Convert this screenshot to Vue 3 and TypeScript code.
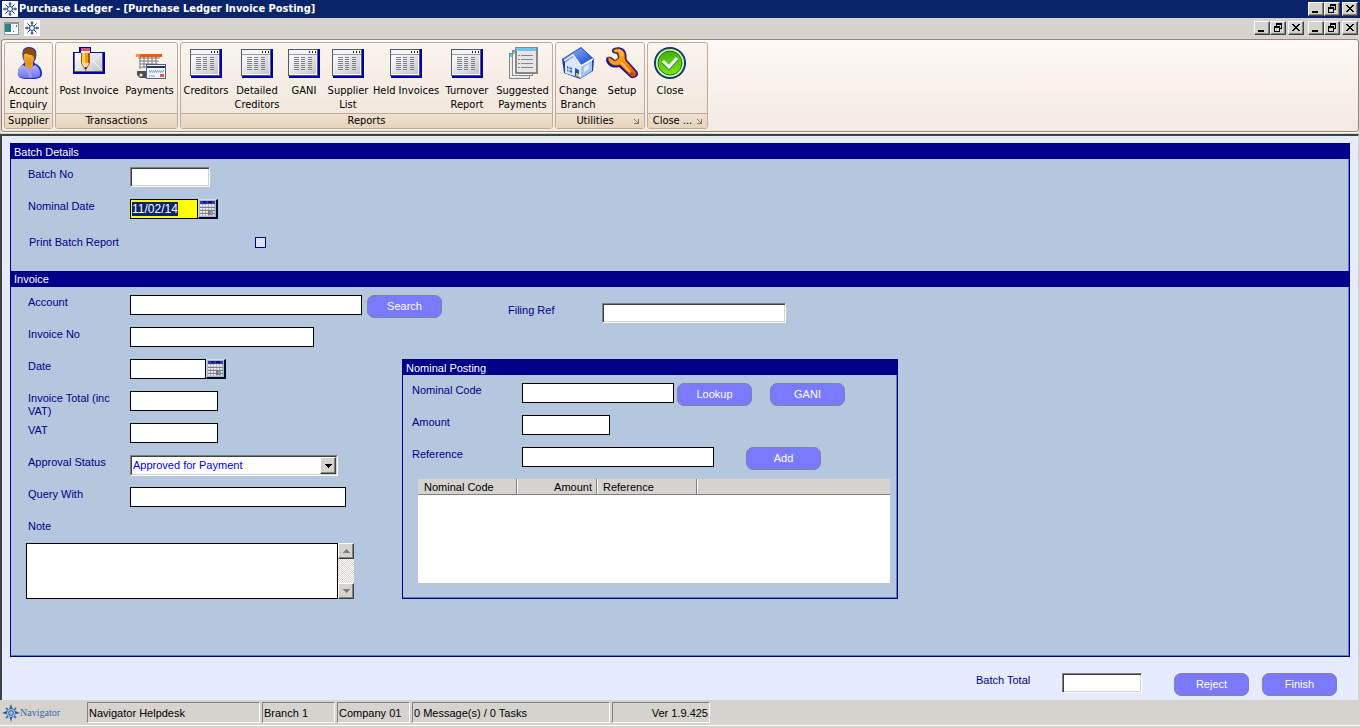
<script setup lang="ts">
import { onMounted, ref } from 'vue'

type IconName =
  | 'user' | 'post' | 'payments' | 'grid' | 'pages' | 'house' | 'wrench' | 'tick'

interface RibbonItem { label: string; icon: IconName; width: number }
interface RibbonGroup { title: string; launcher: boolean; items: RibbonItem[] }

const groups: RibbonGroup[] = [
  { title: 'Supplier', launcher: false, items: [{ label: 'Account\nEnquiry', icon: 'user', width: 47 }] },
  {
    title: 'Transactions',
    launcher: false,
    items: [
      { label: 'Post Invoice', icon: 'post', width: 66 },
      { label: 'Payments', icon: 'payments', width: 55 },
    ],
  },
  {
    title: 'Reports',
    launcher: false,
    items: [
      { label: 'Creditors', icon: 'grid', width: 50 },
      { label: 'Detailed\nCreditors', icon: 'grid', width: 52 },
      { label: 'GANI', icon: 'grid', width: 42 },
      { label: 'Supplier\nList', icon: 'grid', width: 46 },
      { label: 'Held Invoices', icon: 'grid', width: 70 },
      { label: 'Turnover\nReport', icon: 'grid', width: 52 },
      { label: 'Suggested\nPayments', icon: 'pages', width: 59 },
    ],
  },
  {
    title: 'Utilities',
    launcher: true,
    items: [
      { label: 'Change\nBranch', icon: 'house', width: 44 },
      { label: 'Setup', icon: 'wrench', width: 44 },
    ],
  },
  { title: 'Close ...', launcher: true, items: [{ label: 'Close', icon: 'tick', width: 44 }] },
]

const statusCells = [
  { text: 'Navigator Helpdesk', width: 173 },
  { text: 'Branch 1', width: 73 },
  { text: 'Company 01', width: 73 },
  { text: '0 Message(s) / 0 Tasks', width: 198 },
  { text: 'Ver 1.9.425', width: 98, right: true },
]

const windowButtons = ['Minimise', 'Restore', 'Close window']

const nominalDate = ref('11/02/14')
const approval = ref('Approved for Payment')
const dateBox = ref<HTMLInputElement | null>(null)

onMounted(() => {
  dateBox.value?.focus()
  dateBox.value?.select()
})
</script>

<template>
  <div class="window">
    <svg class="defs" width="0" height="0" aria-hidden="true">
      <defs>
        <linearGradient id="skin" x1="0" y1="0" x2="0" y2="1">
          <stop offset="0" stop-color="#ffc24a" /><stop offset="1" stop-color="#e08a10" />
        </linearGradient>
        <linearGradient id="shirt" x1="0" y1="0" x2="0" y2="1">
          <stop offset="0" stop-color="#b9b4ff" /><stop offset="1" stop-color="#6a72f0" />
        </linearGradient>
        <linearGradient id="paper" x1="0" y1="0" x2="1" y2="1">
          <stop offset="0" stop-color="#ffffff" /><stop offset="1" stop-color="#c4c4cc" />
        </linearGradient>
        <linearGradient id="roof" x1="0" y1="0" x2="1" y2="1">
          <stop offset="0" stop-color="#9cc0ff" /><stop offset="1" stop-color="#0a3fd0" />
        </linearGradient>
        <linearGradient id="metal" x1="0" y1="0" x2="1" y2="1">
          <stop offset="0" stop-color="#ffb83c" /><stop offset="0.6" stop-color="#ff8a10" /><stop offset="1" stop-color="#d84a00" />
        </linearGradient>
        <linearGradient id="green" x1="0" y1="0" x2="0" y2="1">
          <stop offset="0" stop-color="#3fb010" /><stop offset="1" stop-color="#7fe810" />
        </linearGradient>
        <symbol id="compass" viewBox="0 0 16 16">
          <g stroke="#163a80" fill="none">
            <circle cx="8" cy="8" r="2.5" />
            <path d="M8 1v4M8 11v4M1 8h4M11 8h4M3.5 3.5l2.6 2.6M10 10l2.5 2.5M12.500 3.500L10 6M6 10l-2.500 2.500" />
            <path d="M6.500 3h3M6.500 13h3M3 6.500v3M13 6.500v3" />
          </g>
        </symbol>
        <symbol id="calendar" viewBox="0 0 17 17">
          <path d="M0 0h17v17H0z" fill="#b4b4c0" />
          <path d="M1 1h15v3H1z" fill="#2c3fae" />
          <path d="M4 2h3M9 2h4" stroke="#0c145c" stroke-width="2" />
          <path d="M1 5.500h15M1 8.500h15M1 11.500h15M1 14.500h15" stroke="#f4f4f8" stroke-width="2" stroke-dasharray="2 1" />
          <path d="M1 7.500h15M1 10.500h15M1 13.500h15" stroke="#80808c" />
          <path d="M9 10h5v5H9z" fill="#b06078" /><path d="M11 11h3v3h-3z" fill="#20c8d8" />
        </symbol>
      </defs>
    </svg>

    <header class="titlebar">
      <svg class="compass" width="16" height="16"><use href="#compass" /></svg>
      <h1>Purchase Ledger - [Purchase Ledger Invoice Posting]</h1>
      <div class="winset">
        <button v-for="(name, i) in windowButtons" :key="name" type="button" class="winbtn" :aria-label="name">
          <svg width="12" height="10" viewBox="0 0 12 10" shape-rendering="crispEdges">
            <path v-if="i === 0" d="M2 7h6v2H2z" />
            <path v-else-if="i === 1" d="M4 0h6v6H8V5h1V2H5v1H4zM2 3h6v6H2zM3 5v3h4V5z" fill-rule="evenodd" />
            <path v-else d="M2 1h2v1h1v1h2V2h1V1h2v1H9v1H8v1H7v1h1v1h1v1h1v1H8V7H7V6H5v1H4v1H2V7h1V6h1V5h1V4H4V3H3V2H2z" />
          </svg>
        </button>
      </div>
    </header>

    <div class="mdibar">
      <svg class="docicon" width="15" height="13" viewBox="0 0 15 13" shape-rendering="crispEdges">
        <path d="M0 0h15v13H0z" fill="#8c98a8" /><path d="M1 2h13v10H1z" fill="#fff" />
        <path d="M1 2h6v8H1z" fill="#2a8a78" /><path d="M5 3h2v7H5z" fill="#3c68b0" />
        <path d="M9 9h1v1H9zM12 3h1v2h-1z" fill="#2a8a78" /><path d="M8 3h4v4H8z" fill="#eef" />
      </svg>
      <svg class="compass" width="16" height="16"><use href="#compass" /></svg>
      <div class="winsets">
        <div v-for="set in 2" :key="set" class="winset">
          <button v-for="(name, i) in windowButtons" :key="name" type="button" class="winbtn" :aria-label="name">
            <svg width="12" height="10" viewBox="0 0 12 10" shape-rendering="crispEdges">
              <path v-if="i === 0" d="M2 7h6v2H2z" />
              <path v-else-if="i === 1" d="M4 0h6v6H8V5h1V2H5v1H4zM2 3h6v6H2zM3 5v3h4V5z" fill-rule="evenodd" />
              <path v-else d="M2 1h2v1h1v1h2V2h1V1h2v1H9v1H8v1H7v1h1v1h1v1h1v1H8V7H7V6H5v1H4v1H2V7h1V6h1V5h1V4H4V3H3V2H2z" />
            </svg>
          </button>
        </div>
      </div>
    </div>

    <nav class="ribbon">
      <section v-for="group in groups" :key="group.title" class="group">
        <div class="items">
          <button v-for="item in group.items" :key="item.label" type="button" class="tool" :style="{ width: item.width + 'px' }">
            <svg width="32" height="32" viewBox="0 0 32 32" aria-hidden="true">
              <g v-if="item.icon === 'user'">
                <path d="M10 3C12-1 21-1 23 4c1 5 0 8-2 11 1 2 3 2 5 4 3 3 4 8 2 11-4 3-18 3-22 0-2-4-1-9 3-12l3-3c-3-3-3-8-2-12z" fill="#1830d0" />
                <path d="M5 29c-1-5 1-9 5-11 4 3 8 3 12 0 4 2 6 7 5 11-4 3-18 3-22 0z" fill="url(#shirt)" />
                <path d="M12 15h8v4l-3 5-5-5z" fill="#e89a20" />
                <path d="M14 23l3-2 2 9h-3z" fill="#9a9cf8" />
                <ellipse cx="16" cy="10" rx="5.500" ry="8" fill="url(#skin)" />
                <path d="M10 8c-1-4 2-7 6-7 5 0 7 3 7 8l-2 4c0-4-1-5-4-5-3-1-4-2-7 0z" fill="#8a4a08" />
              </g>
              <g v-else-if="item.icon === 'post'">
                <path d="M0 5h6V0h12v5h14v22H0z" fill="#0000a4" />
                <path d="M1 6h29v19H1z" fill="#58606a" /><path d="M2 6h27v18H2z" fill="url(#paper)" />
                <path d="M2 23l9-9h9l9 9M20 14l8-7" fill="none" stroke="#f4f4f8" stroke-width="1" />
                <path d="M8 6h9v10l-4.500 8L8 16z" fill="#a85400" /><path d="M9 6h3v10H9z" fill="#ffd048" /><path d="M12 6h3v10h-3z" fill="#f49a18" />
                <path d="M8 1h9v4H8z" fill="#e0506c" /><path d="M8 4h9v2H8z" fill="#e8e8e8" />
                <path d="M9 16h7l-3.500 7z" fill="#f8ddb0" /><path d="M11.500 20h2.500l-1.200 3z" fill="#222" />
              </g>
              <g v-else-if="item.icon === 'payments'">
                <path d="M2 7h26v3H2z" fill="#f05a10" /><path d="M2 7h4v3H2z" fill="#ff9440" />
                <path d="M4 11h22l-2 10H6z" fill="#fff" />
                <path d="M4 11h22M5 14h20M6 17h18M6 20h18M6 10v12M10 10v11M14 10v11M18 10v11M22 10v11" stroke="#777" fill="none" />
                <path d="M3 24h10v7H6l-3-3z" fill="#484c54" /><circle cx="7" cy="28" r="1.500" fill="#eee" />
                <path d="M12 17h20v15H12z" fill="#50608c" /><path d="M13 18h18v13H13z" fill="#eef4fc" />
                <path d="M13 19h18v2H13z" fill="#303848" /><path d="M15 24h15M16 25h14" stroke="#4d83d8" stroke-dasharray="1 1" />
                <path d="M15 29h6" stroke="#98a0b0" /><path d="M26 27h4v3h-4z" fill="#d8642c" />
              </g>
              <g v-else-if="item.icon === 'grid'" shape-rendering="crispEdges">
                <path d="M0 2h32v29H1z" fill="#0000b4" /><path d="M0 2h30v27H0z" fill="#555b66" />
                <path d="M1 3h28v25H1z" fill="#f4f4f6" /><path d="M1 7h28v1H1z" fill="#9a9aa0" />
                <path d="M2 8h26v19H2z" fill="url(#paper)" /><path d="M21 5h1M24 5h1M27 5h1" stroke="#222" stroke-width="2" />
                <path d="M6 10.500h5M6 12.500h5M6 14.500h5M6 16.500h5M6 18.500h5M6 20.500h5M6 22.500h5M13 10.500h4M13 12.500h4M13 14.500h4M13 16.500h4M13 18.500h4M13 20.500h4M13 22.500h4M20 10.500h4M20 12.500h4M20 14.500h4M20 16.500h4M20 18.500h4M20 20.500h4M20 22.500h4" stroke="#808088" />
              </g>
              <g v-else-if="item.icon === 'pages'" shape-rendering="crispEdges">
                <path d="M2 6.500h20v25H2z" fill="#ececec" stroke="#888" /><path d="M3 7h5v3H3z" fill="#60c8f8" />
                <path d="M5 3.500h20v25H5z" fill="#f4f4f4" stroke="#888" /><path d="M6 4h5v3H6z" fill="#60c8f8" />
                <path d="M8.500.500h21v25h-21z" fill="#e6e6e6" stroke="#888" stroke-width="2" /><path d="M9 1h20v3H9z" fill="#68c8f8" />
                <path d="M11 8.500h2M14 8.500h12M11 12.500h2M14 12.500h12M11 16.500h2M14 16.500h12M11 20.500h2M14 20.500h12" stroke="#888" />
              </g>
              <g v-else-if="item.icon === 'house'">
                <path d="M0 12L19 0l13 12-1 12-13 8-16-6z" fill="#183cb0" />
                <path d="M3 15l7-7 9 11v12L3 26z" fill="#dce9fc" /><path d="M19 19l11-7v12l-11 7z" fill="#a7c4ef" />
                <path d="M1 12L19 1l12 11-12 8-8-10-7 5z" fill="url(#roof)" />
                <path d="M2 14l9-6 8 11 12-7" stroke="#fff" stroke-width="1.500" fill="none" />
                <path d="M5 19l5 2v5l-5-2z" fill="#2860c8" /><path d="M13 21l4 2v8l-4-2z" fill="#2050b8" /><path d="M14 26l3 1v3l-3-1z" fill="#e9be58" />
                <path d="M7 19v6M5 22l5 1" stroke="#e8f2ff" /><path d="M22 20l5-3v5l-5 3z" fill="#dceaff" />
              </g>
              <g v-else-if="item.icon === 'wrench'">
                <path d="M8 1c5-2 11 0 12 5 1 3 0 5 1 7l10 11c3 4-1 8-6 7L13 20c-6 2-12-1-13-7 0-3 2-4 5-3l4 3 3-2-1-4-4-1c-2-2-1-4 1-5z" fill="#0818a4" />
                <path d="M9 2c4-1 9 1 10 5 0 3 0 5 1 7l10 11c1 3-1 5-4 5L14 18c-6 2-11-1-12-6 0-2 1-2 2-1l5 3 4-3-1-5-4-1c-1-1-1-2 1-3z" fill="url(#metal)" stroke="#903000" />
                <path d="M12 3c4 0 5 3 4 6M15 15l9 10" stroke="#ffd060" stroke-width="1.500" fill="none" />
                <circle cx="26" cy="27" r="1.500" fill="#b83400" />
              </g>
              <g v-else>
                <circle cx="16" cy="16" r="16" fill="#0a2a90" /><circle cx="16" cy="16" r="15" fill="#145a14" />
                <circle cx="16" cy="16" r="14" fill="#dff4d8" /><circle cx="16" cy="16" r="12" fill="url(#green)" stroke="#187808" />
                <path d="M9 15l6 6 8-9" stroke="#4c8c38" stroke-width="4" fill="none" /><path d="M9 14l6 6 8-9" stroke="#f4f4f4" stroke-width="3" fill="none" />
              </g>
            </svg>
            <span>{{ item.label }}</span>
          </button>
        </div>
        <div class="caption">
          <span>{{ group.title }}</span>
          <svg v-if="group.launcher" width="6" height="6" viewBox="0 0 6 6" shape-rendering="crispEdges">
            <path d="M0 0h1v1H0zM1 1h1v1H1zM2 2h1v1H2zM3 3h1v1H3zM4 0h1v5H0V4h4z" fill="#8a7468" />
          </svg>
        </div>
      </section>
    </nav>

    <main class="workspace">
      <div class="panel ledger">
        <h2>Batch Details</h2>
        <div class="batch">
          <div class="field">
            <label for="batch-no">Batch No</label>
            <input id="batch-no" class="sunken w80" type="text" />
          </div>
          <div class="field">
            <label for="nominal-date">Nominal Date</label>
            <input id="nominal-date" ref="dateBox" v-model="nominalDate" class="active" type="text" />
            <button type="button" class="cal" aria-label="Pick nominal date"><svg width="17" height="17"><use href="#calendar" /></svg></button>
          </div>
          <div class="field printrow">
            <label for="print-batch">Print Batch Report</label>
            <input id="print-batch" type="checkbox" />
          </div>
        </div>

        <h2>Invoice</h2>
        <div class="invoice">
          <div class="entry">
            <div class="field">
              <label for="account">Account</label>
              <input id="account" class="w232" type="text" />
              <button type="button" class="pill search">Search</button>
            </div>
            <div class="field">
              <label for="invoice-no">Invoice No</label>
              <input id="invoice-no" class="w184" type="text" />
            </div>
            <div class="field">
              <label for="invoice-date">Date</label>
              <input id="invoice-date" class="w76" type="text" />
              <button type="button" class="cal" aria-label="Pick invoice date"><svg width="17" height="17"><use href="#calendar" /></svg></button>
            </div>
            <div class="field">
              <label for="invoice-total">Invoice Total (inc VAT)</label>
              <input id="invoice-total" class="w88" type="text" />
            </div>
            <div class="field">
              <label for="vat">VAT</label>
              <input id="vat" class="w88" type="text" />
            </div>
            <div class="field">
              <label for="approval">Approval Status</label>
              <div class="combo">
                <select id="approval" v-model="approval"><option>Approved for Payment</option></select>
                <span class="arrow"><svg width="7" height="4" viewBox="0 0 7 4" shape-rendering="crispEdges"><path d="M0 0h7v1H6v1H5v1H4v1H3V3H2V2H1V1H0z" /></svg></span>
              </div>
            </div>
            <div class="field">
              <label for="query">Query With</label>
              <input id="query" class="w216" type="text" />
            </div>
            <div class="note">
              <label for="note">Note</label>
              <div class="notebox">
                <textarea id="note"></textarea>
                <div class="scroll">
                  <button type="button" aria-label="Scroll up"><svg width="7" height="4" viewBox="0 0 7 4" shape-rendering="crispEdges"><path d="M3 0h1v1h1v1h1v1h1v1H0V3h1V2h1V1h1z" fill="#808080" /></svg></button>
                  <button type="button" aria-label="Scroll down"><svg width="7" height="4" viewBox="0 0 7 4" shape-rendering="crispEdges"><path d="M0 0h7v1H6v1H5v1H4v1H3V3H2V2H1V1H0z" fill="#808080" /></svg></button>
                </div>
              </div>
            </div>
          </div>

          <div class="posting">
            <div class="field filing">
              <label for="filing">Filing Ref</label>
              <input id="filing" class="sunken w184" type="text" />
            </div>
            <section class="panel nominal">
              <h2>Nominal Posting</h2>
              <div class="nominal-body">
                <div class="field">
                  <label for="code">Nominal Code</label>
                  <input id="code" class="w152" type="text" />
                  <button type="button" class="pill lookup">Lookup</button>
                  <button type="button" class="pill gani">GANI</button>
                </div>
                <div class="field">
                  <label for="amount">Amount</label>
                  <input id="amount" class="w88" type="text" />
                </div>
                <div class="field">
                  <label for="reference">Reference</label>
                  <input id="reference" class="w192" type="text" />
                  <button type="button" class="pill add">Add</button>
                </div>
                <div class="list">
                  <table>
                    <thead>
                      <tr><th class="code">Nominal Code</th><th class="amount">Amount</th><th class="ref">Reference</th><th></th></tr>
                    </thead>
                  </table>
                </div>
              </div>
            </section>
          </div>
        </div>
      </div>

      <div class="totals">
        <label for="total">Batch Total</label>
        <input id="total" class="sunken w80" type="text" />
        <button type="button" class="pill reject">Reject</button>
        <button type="button" class="pill">Finish</button>
      </div>
    </main>

    <footer class="status">
      <div class="brand">
        <svg width="18" height="18" viewBox="0 0 18 18">
          <path d="M9 0l2 6 7 3-7 2-2 7-2-7-7-2 7-3z" fill="#2a5a9c" />
          <path d="M4 4l3 3M14 4l-3 3M4 14l3-3M14 14l-3-3" stroke="#4a7ab4" stroke-width="2" />
          <circle cx="9" cy="9" r="3.500" fill="#3c6cab" stroke="#c8d8ea" />
          <path d="M9 7v4M7 9h4" stroke="#c8d8ea" />
        </svg>
        <span>Navigator</span>
      </div>
      <div v-for="cell in statusCells" :key="cell.text" class="cell" :class="{ right: cell.right }" :style="{ width: cell.width + 'px' }">{{ cell.text }}</div>
    </footer>
  </div>
</template>

<style>
html, body { margin: 0; height: 100%; }
#app { min-height: 100%; display: flex; }
</style>

<style scoped>
* { box-sizing: border-box; }
.window {
  flex: 1;
  display: flex;
  flex-direction: column;
  min-height: 100vh;
  background: #d6d3ce;
  font: 11px/13px "Liberation Sans", Arial, sans-serif;
  color: #000;
}
.defs { position: absolute; }
button, input, select, textarea { font: inherit; margin: 0; padding: 0; border-radius: 0; }
h1, h2 { margin: 0; font-weight: normal; }

.titlebar { display: flex; align-items: center; height: 18px; padding: 0 2px; background: #0a246a; }
.titlebar h1 { flex: 1; margin-left: 1px; font: bold 11px/18px "DejaVu Sans Condensed", sans-serif; color: #fff; }
.compass { background: #fff; }
.mdibar { display: flex; align-items: center; height: 20px; padding: 0 2px 0 4px; }
.mdibar .compass { margin-left: 5px; }
.winsets { display: flex; gap: 4px; margin-left: auto; }
.winset { display: flex; }
.winbtn {
  width: 16px; height: 14px;
  display: flex; align-items: center; justify-content: center;
  background: #d6d3ce;
  border: 1px solid; border-color: #fff #404040 #404040 #fff;
  box-shadow: inset -1px -1px #848284;
}
.winbtn svg { flex: none; }
.winbtn:last-child { margin-left: 2px; }

.ribbon {
  display: flex; gap: 2px;
  height: 93px; margin: 1px 1px 2px 1px; padding: 2px;
  background: linear-gradient(#fdf9f6, #f3e9e2);
  border: 1px solid #9c8478;
  border-radius: 3px;
  box-shadow: 0 1px #fff;
}
.group {
  display: flex; flex-direction: column;
  border: 1px solid #bfaa9f; border-radius: 3px;
  background: linear-gradient(#fbf5ef, #efe4d8);
}
.items { flex: 1; display: flex; }
.tool {
  display: flex; flex-direction: column; align-items: center;
  padding-top: 4px; border: 0; background: none; color: #000;
  font: 11px/14px "DejaVu Sans Condensed", sans-serif;
  white-space: pre; text-align: center;
}
.tool svg { flex: none; }
.tool span { margin-top: 5px; }
.caption {
  display: flex; align-items: center; justify-content: center;
  height: 15px; border-top: 1px solid #bfaa9f;
  background: linear-gradient(#eee0cf, #e6d4bc);
  font: 11px/14px "DejaVu Sans Condensed", sans-serif;
}
.caption span { flex: 1; text-align: center; white-space: nowrap; }
.caption svg { margin: 2px 4px 0 0; }
.group:last-child { min-width: 61px; }

.workspace {
  flex: 1; display: flex; flex-direction: column;
  margin-right: 1px; padding: 7px 8px 0 8px;
  background: #e6ebff;
  border: solid #404040; border-width: 2px 1px 0 2px;
  border-right-color: #d6d3ce;
  color: #00008b;
}
.panel { border: 1px solid #00008b; background: #b5c7de; box-shadow: inset -1px -1px #5a82b8; }
.panel h2 { height: 16px; padding-left: 3px; background: #00008b; color: #fff; font-size: 11px; line-height: 17px; }
.panel > h2:first-child { height: 15px; line-height: 16px; }
.ledger { flex: 1; }
.batch { height: 112px; padding: 8px 17px 0; }
.invoice { display: flex; padding: 8px 0 0 15px; }

.field { display: flex; height: 32px; padding-left: 2px; }
.batch .field { padding-left: 0; }
.field label { flex: none; width: 102px; padding: 1px 8px 0 0; }
.entry { width: 376px; flex: none; }
input[type="text"] { flex: none; height: 20px; padding: 0 2px; border: 1px solid #000; background: #fff; color: #00f; outline: none; }
input.sunken { border-color: #808080 #fff #fff #808080; box-shadow: inset 1px 1px #404040, inset -1px -1px #d6d3ce; }
input[type="text"].active { width: 68px; padding: 0 1px; background: #ff0; color: #00008b; font-size: 12px; }
input.active::selection { background: #0a246a; color: #fff; }
.w76 { width: 76px; }
.w80 { width: 80px; }
.w88 { width: 88px; }
.w152 { width: 152px; }
.w184 { width: 184px; }
.w192 { width: 192px; }
.w216 { width: 216px; }
.w232 { width: 232px; }
.cal {
  flex: none; width: 20px; height: 20px; display: flex;
  border: solid; border-width: 1px 2px 2px 1px;
  border-color: #c8dcf4 #000c28 #000c28 #c8dcf4;
  background: #d6d3ce;
}
.printrow { align-items: center; }
.batch .printrow { padding-left: 1px; height: 23px; }
.batch .printrow label { width: 226px; padding: 0; }
input[type="checkbox"] { appearance: none; width: 11px; height: 11px; border: 1px solid #00008b; background: #dce4f2; }
.pill {
  flex: none; width: 75px; height: 23px;
  border: 1px solid #84829c; border-radius: 7px;
  background: #7b79ff; color: #fff;
}
.search { margin-left: 5px; }
.combo { position: relative; width: 208px; height: 21px; border: 1px solid; border-color: #808080 #fff #fff #808080; }
.combo select {
  width: 100%; height: 100%; appearance: none; padding: 0 18px 0 1px;
  border: 1px solid; border-color: #404040 #d6d3ce #d6d3ce #404040;
  background: #fff; color: #00f;
}
.arrow, .scroll button {
  display: flex; align-items: center; justify-content: center;
  width: 16px; height: 16px; background: #d6d3ce;
  border: 1px solid; border-color: #fff #404040 #404040 #fff;
  box-shadow: inset -1px -1px #848284;
}
.arrow { position: absolute; top: 1px; right: 1px; height: 17px; pointer-events: none; }
.note label { display: block; height: 24px; padding: 1px 0 0 2px; }
.notebox { display: flex; }
.notebox textarea { width: 312px; height: 56px; border: 1px solid #000; background: #fff; resize: none; outline: none; overflow: hidden; }
.scroll { display: flex; flex-direction: column; justify-content: space-between; width: 16px; background: repeating-conic-gradient(#fff 0 25%, #d6d3ce 0 50%) 0 0 / 2px 2px; }

.filing { height: 64px; padding: 8px 0 0 106px; }
.filing label { width: 94px; }
.nominal { width: 496px; }
.nominal-body { padding: 8px 7px 15px; }
.nominal-body .field label { width: 110px; }
.lookup { margin-left: 3px; }
.gani { margin-left: 18px; }
.add { margin-left: 32px; }
.list { height: 104px; margin-left: 8px; background: #fff; }
table { width: 100%; border-collapse: separate; border-spacing: 0; table-layout: fixed; color: #000; }
th {
  height: 16px; padding: 2px 4px 0 6px; background: #d6d3ce;
  border-right: 1px solid #808080; border-bottom: 1px solid #808080;
  box-shadow: inset 1px 0 #fff; text-align: left; font-weight: normal; line-height: 13px;
}
th:first-child { box-shadow: none; }
th:last-child { border-right: 0; }
th.code { width: 99px; }
th.amount { width: 80px; text-align: right; }
th.ref { width: 100px; }

.totals { display: flex; justify-content: flex-end; height: 43px; padding: 16px 13px 0 0; }
.totals label { width: 86px; padding-top: 1px; }
.reject { margin: 0 13px 0 32px; }

.status { display: flex; gap: 2px; height: 28px; padding: 2px 0 5px; box-shadow: inset 0 -2px #d6d3ce, inset 0 -3px #fff; }
.brand { display: flex; align-items: center; width: 85px; padding-left: 2px; font: 10px/12px "Liberation Serif", serif; color: #3468a8; }
.cell { padding: 0 1px; border: 1px solid; border-color: #848284 #fff #fff #848284; line-height: 20px; white-space: nowrap; }
.right { text-align: right; }
</style>
